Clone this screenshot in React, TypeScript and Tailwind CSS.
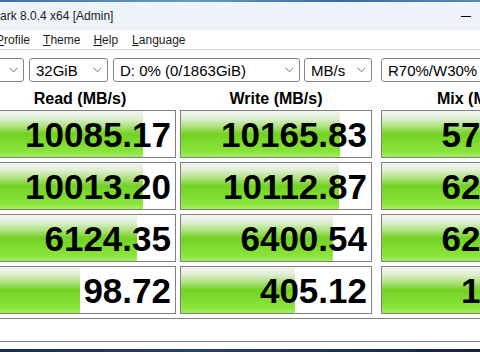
const rows = [
  { read: "10085.17", write: "10165.83", mix: "5714.63" },
  { read: "10013.20", write: "10112.87", mix: "6218.40" },
  { read: "6124.35", write: "6400.54", mix: "6206.91" },
  { read: "98.72", write: "405.12", mix: "135.72" },
]

const barWidth = (value: string) => {
  const v = parseFloat(value)
  return Math.round(((Math.log10(v) + 1) / 6) * 190)
}

const Chevron = () => (
  <svg width="9" height="6" viewBox="0 0 9 6" className="shrink-0">
    <path d="M0.5 0.8 L4.5 4.8 L8.5 0.8" fill="none" stroke="#6b6b6b" strokeWidth="1" />
  </svg>
)

const Combo = ({
  label,
  className,
  arrow = true,
}: {
  label: string
  className: string
  arrow?: boolean
}) => (
  <div
    className={`flex h-[24px] shrink-0 items-center justify-between rounded-[3px] border border-[#858585] bg-white pl-[6px] pr-[5px] text-[15px] leading-none text-black ${className}`}
  >
    <span className="whitespace-nowrap">{label}</span>
    {arrow && <Chevron />}
  </div>
)

const Cell = ({ value, className }: { value: string; className: string }) => (
  <div
    className={`flex h-[48px] w-[192px] shrink-0 items-center justify-end border border-[#808080] bg-white bg-[linear-gradient(180deg,#f3f4f1_0%,#dfefd2_16%,#a8e074_35%,#72d122_50%,#7bd92b_63%,#8ae43b_88%,#a4ec66_100%)] bg-no-repeat pr-[4px] ${className}`}
    style={{ backgroundSize: `${barWidth(value)}px 100%` }}
  >
    <span className="whitespace-nowrap text-[35px] font-bold leading-none text-black">
      {value}
    </span>
  </div>
)

export default function App() {
  return (
    <div className="relative h-[352px] w-[480px] overflow-hidden bg-white font-['Liberation_Sans',Arial,sans-serif]">
      <div className="h-[2px] bg-[linear-gradient(90deg,#3f72a8,#6c98c6_40%,#3a6aa0_70%,#5b87b8)]" />

      {/* title bar */}
      <div className="flex h-[28px] items-center justify-between bg-[#eef3f9] text-[12px] text-[#1b1b1b]">
        <span className="whitespace-nowrap">ark 8.0.4 x64 [Admin]</span>
        <div className="mr-[9px] h-[1px] w-[10px] bg-black" />
      </div>

      {/* menu */}
      <div className="flex h-[20px] items-end gap-[13px] border-b border-[#d4d4d4] pb-[2px] text-[12px] leading-[14px] text-[#1b1b1b]">
        <span className="ml-[-4px]">
          <span className="underline">P</span>rofile
        </span>
        <span>
          <span className="underline">T</span>heme
        </span>
        <span>
          <span className="underline">H</span>elp
        </span>
        <span className="ml-[1px]">
          <span className="underline">L</span>anguage
        </span>
      </div>

      {/* combos */}
      <div className="mt-[8px] flex">
        <Combo label="" className="ml-[-60px] w-[84px]" />
        <Combo label="32GiB" className="ml-[5px] w-[79px]" />
        <Combo label="D: 0% (0/1863GiB)" className="ml-[5px] w-[187px]" />
        <Combo label="MB/s" className="ml-[4px] w-[68px]" />
        <Combo label="R70%/W30%" className="ml-[9px] w-[190px]" arrow={false} />
      </div>

      {/* headers */}
      <div className="flex h-[28px] pt-[8px] text-[16px] font-bold leading-[18px] text-black">
        <div className="ml-[-16px] w-[192px] shrink-0 text-center">Read (MB/s)</div>
        <div className="ml-[4px] w-[192px] shrink-0 text-center">Write (MB/s)</div>
        <div className="ml-[9px] w-[192px] shrink-0 text-center">Mix (MB/s)</div>
      </div>

      {/* results */}
      <div className="flex flex-col gap-[4px]">
        {rows.map((r, i) => (
          <div key={i} className="flex">
            <Cell value={r.read} className="ml-[-16px]" />
            <Cell value={r.write} className="ml-[4px]" />
            <Cell value={r.mix} className="ml-[9px]" />
          </div>
        ))}
      </div>

      {/* comment */}
      <div className="ml-[-16px] mt-[4px] h-[24px] w-[620px] border border-[#808080] bg-white" />
      <div className="h-[7px] bg-white" />
      <div className="h-[10px] bg-[linear-gradient(90deg,#1c2b4d,#27406c_40%,#16223e)]" />
    </div>
  )
}
